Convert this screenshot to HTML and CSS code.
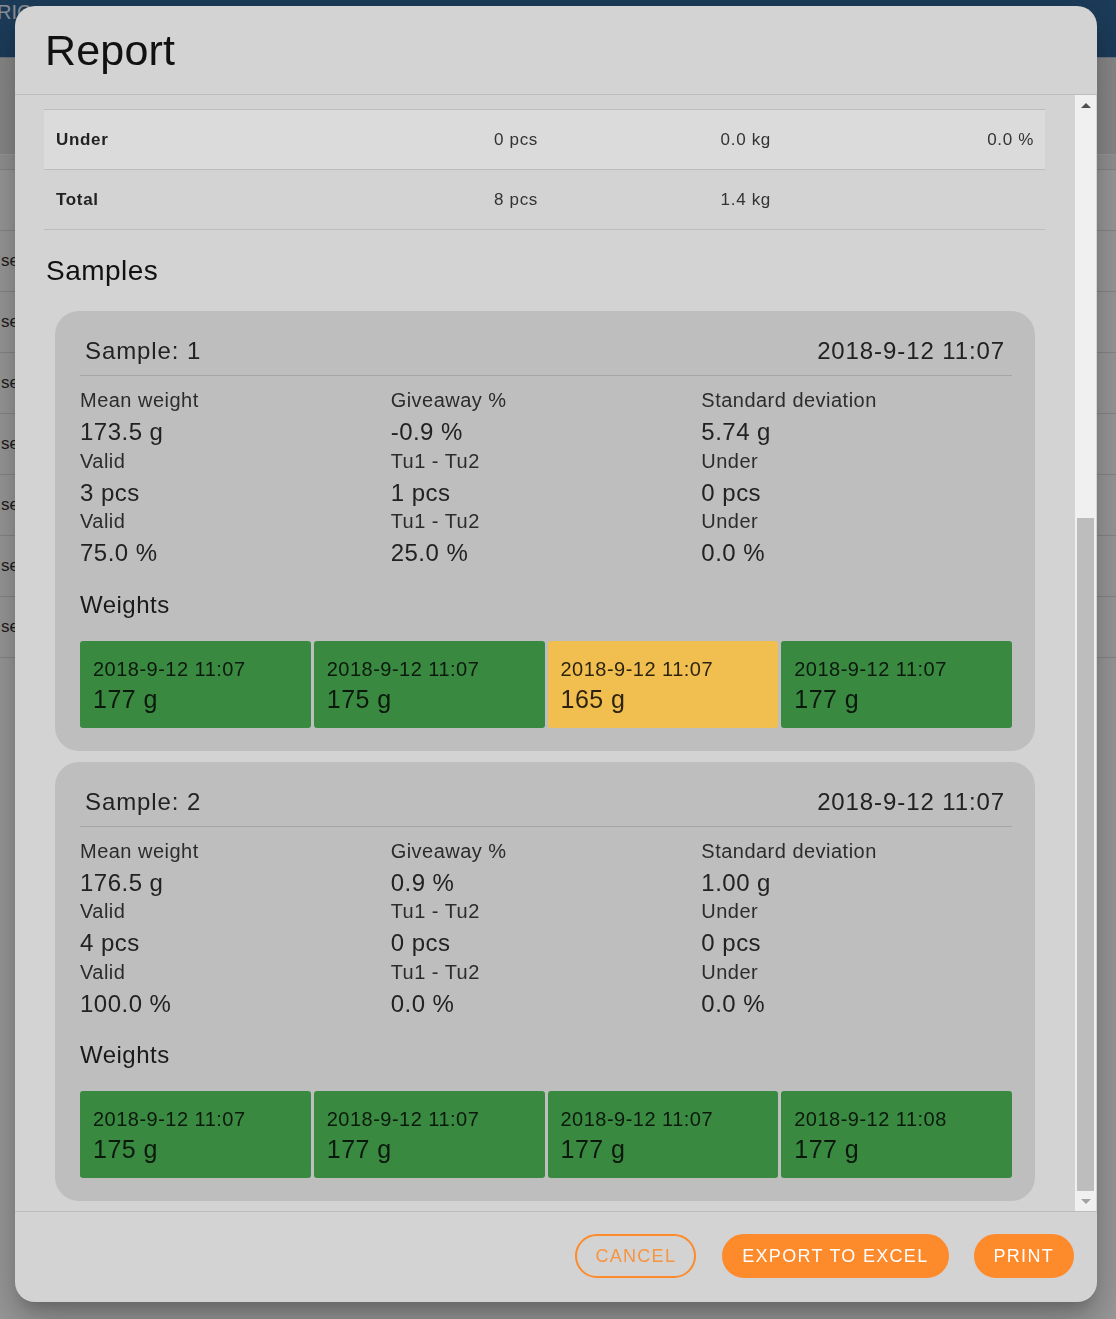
FILE: index.html
```html
<!DOCTYPE html>
<html lang="en">

<head>
    <meta charset="UTF-8">
    <meta name="viewport" content="width=device-width, initial-scale=1.0">
    <title>Report</title>
    <link rel="stylesheet" href="styles.css">
</head>

<body>
    <!-- page behind the modal -->
    <div class="page">
        <div class="topbar"><span class="brand">RIC</span></div>
        <div class="toolbar"></div>
        <div class="list">
            <div class="list-row head"></div>
            <div class="list-row"></div>
            <div class="list-row">se</div>
            <div class="list-row">se</div>
            <div class="list-row">se</div>
            <div class="list-row">se</div>
            <div class="list-row">se</div>
            <div class="list-row">se</div>
            <div class="list-row">se</div>
        </div>
    </div>
    <div class="backdrop"></div>

    <div class="dialog">
        <div class="dialog-title">
            <h2>Report</h2>
        </div>

        <div class="dialog-body">
            <div class="content">
                <div class="content-inner">
                    <div class="summary">
                        <div class="summary-row header">
                            <span class="cell label"></span>
                            <span class="cell num">Count</span>
                            <span class="cell num">Weight</span>
                            <span class="cell num">Percent</span>
                        </div>
                        <div class="summary-row alt">
                            <span class="cell label">Valid</span>
                            <span class="cell num">7 pcs</span>
                            <span class="cell num">1.2 kg</span>
                            <span class="cell num">87.5 %</span>
                        </div>
                        <div class="summary-row">
                            <span class="cell label">Tu1 - Tu2</span>
                            <span class="cell num">1 pcs</span>
                            <span class="cell num">0.2 kg</span>
                            <span class="cell num">12.5 %</span>
                        </div>
                        <div class="summary-row alt">
                            <span class="cell label">Under</span>
                            <span class="cell num">0 pcs</span>
                            <span class="cell num">0.0 kg</span>
                            <span class="cell num">0.0 %</span>
                        </div>
                        <div class="summary-row">
                            <span class="cell label">Total</span>
                            <span class="cell num">8 pcs</span>
                            <span class="cell num">1.4 kg</span>
                            <span class="cell num"></span>
                        </div>
                    </div>

                    <h3 class="section-title">Samples</h3>

                    <div class="sample">
                        <div class="sample-head">
                            <span>Sample: 1</span>
                            <span>2018-9-12 11:07</span>
                        </div>
                        <div class="stats">
                            <div class="stat">
                                <div class="stat-label">Mean weight</div>
                                <div class="stat-value">173.5 g</div>
                                <div class="stat-label">Valid</div>
                                <div class="stat-value">3 pcs</div>
                                <div class="stat-label">Valid</div>
                                <div class="stat-value">75.0 %</div>
                            </div>
                            <div class="stat">
                                <div class="stat-label">Giveaway %</div>
                                <div class="stat-value">-0.9 %</div>
                                <div class="stat-label">Tu1 - Tu2</div>
                                <div class="stat-value">1 pcs</div>
                                <div class="stat-label">Tu1 - Tu2</div>
                                <div class="stat-value">25.0 %</div>
                            </div>
                            <div class="stat">
                                <div class="stat-label">Standard deviation</div>
                                <div class="stat-value">5.74 g</div>
                                <div class="stat-label">Under</div>
                                <div class="stat-value">0 pcs</div>
                                <div class="stat-label">Under</div>
                                <div class="stat-value">0.0 %</div>
                            </div>
                        </div>
                        <h4 class="weights-title">Weights</h4>
                        <div class="weights">
                            <div class="weight ok">
                                <div class="weight-date">2018-9-12 11:07</div>
                                <div class="weight-value">177 g</div>
                            </div>
                            <div class="weight ok">
                                <div class="weight-date">2018-9-12 11:07</div>
                                <div class="weight-value">175 g</div>
                            </div>
                            <div class="weight warn">
                                <div class="weight-date">2018-9-12 11:07</div>
                                <div class="weight-value">165 g</div>
                            </div>
                            <div class="weight ok">
                                <div class="weight-date">2018-9-12 11:07</div>
                                <div class="weight-value">177 g</div>
                            </div>
                        </div>
                    </div>

                    <div class="sample">
                        <div class="sample-head">
                            <span>Sample: 2</span>
                            <span>2018-9-12 11:07</span>
                        </div>
                        <div class="stats">
                            <div class="stat">
                                <div class="stat-label">Mean weight</div>
                                <div class="stat-value">176.5 g</div>
                                <div class="stat-label">Valid</div>
                                <div class="stat-value">4 pcs</div>
                                <div class="stat-label">Valid</div>
                                <div class="stat-value">100.0 %</div>
                            </div>
                            <div class="stat">
                                <div class="stat-label">Giveaway %</div>
                                <div class="stat-value">0.9 %</div>
                                <div class="stat-label">Tu1 - Tu2</div>
                                <div class="stat-value">0 pcs</div>
                                <div class="stat-label">Tu1 - Tu2</div>
                                <div class="stat-value">0.0 %</div>
                            </div>
                            <div class="stat">
                                <div class="stat-label">Standard deviation</div>
                                <div class="stat-value">1.00 g</div>
                                <div class="stat-label">Under</div>
                                <div class="stat-value">0 pcs</div>
                                <div class="stat-label">Under</div>
                                <div class="stat-value">0.0 %</div>
                            </div>
                        </div>
                        <h4 class="weights-title">Weights</h4>
                        <div class="weights">
                            <div class="weight ok">
                                <div class="weight-date">2018-9-12 11:07</div>
                                <div class="weight-value">175 g</div>
                            </div>
                            <div class="weight ok">
                                <div class="weight-date">2018-9-12 11:07</div>
                                <div class="weight-value">177 g</div>
                            </div>
                            <div class="weight ok">
                                <div class="weight-date">2018-9-12 11:07</div>
                                <div class="weight-value">177 g</div>
                            </div>
                            <div class="weight ok">
                                <div class="weight-date">2018-9-12 11:08</div>
                                <div class="weight-value">177 g</div>
                            </div>
                        </div>
                    </div>
                </div>
            </div>

            <!-- scrolled to the bottom -->
            <div class="scrollbar">
                <div class="sb-arrow"><span class="tri up"></span></div>
                <div class="sb-track"><div class="sb-thumb"></div></div>
                <div class="sb-arrow"><span class="tri down"></span></div>
            </div>
        </div>

        <div class="dialog-actions">
            <button class="btn outlined">Cancel</button>
            <button class="btn filled">Export to Excel</button>
            <button class="btn filled">Print</button>
        </div>
    </div>
</body>

</html>
```

FILE: styles.css
```css
html,
body {
    margin: 0;
    height: 100%;
}

body {
    font-family: "Liberation Sans", Arial, sans-serif;
    background-color: #fff;
    overflow: hidden;
}

/* page behind the dialog */
.topbar {
    height: 43px;
    background-color: #2f6496;
    border-bottom: 1px solid #b5c6d8;
    padding-bottom: 14px;
    background-clip: padding-box;
    box-shadow: inset 0 -14px 0 #2f6496;
}

.brand {
    display: block;
    margin-left: -3px;
    padding-top: 1px;
    color: #e6eef6;
    font-size: 20px;
}

.toolbar {
    height: 96px;
    background-color: #e4e4e4;
    border-bottom: 1px solid #fff;
}

.list-row {
    height: 60px;
    line-height: 60px;
    border-bottom: 1px solid #e0e0e0;
    font-size: 17px;
    color: #333;
    padding-left: 1px;
}

.list-row.head {
    height: 14px;
    background-color: #f4f4f4;
}

.backdrop {
    position: fixed;
    inset: 0;
    background-color: rgba(0, 0, 0, 0.4);
}

/* dialog */
.dialog {
    position: fixed;
    left: 15px;
    top: 6px;
    width: 1082px;
    height: 1296px;
    display: flex;
    flex-direction: column;
    background-color: #d3d3d3;
    border-radius: 20px;
    overflow: hidden;
    box-shadow: 0 11px 15px -7px rgba(0, 0, 0, 0.2),
        0 24px 38px 3px rgba(0, 0, 0, 0.14),
        0 9px 46px 8px rgba(0, 0, 0, 0.12);
}

.dialog-title {
    height: 88px;
    display: flex;
    align-items: center;
    padding: 0 30px;
    border-bottom: 1px solid #bcbcbc;
    flex-shrink: 0;
}

.dialog-title h2 {
    margin: 0;
    font-size: 43px;
    font-weight: 400;
    color: #111;
    letter-spacing: 0.2px;
}

.dialog-body {
    height: 1116px;
    display: flex;
    flex-shrink: 0;
}

.content {
    flex: 1;
    display: flex;
    flex-direction: column;
    justify-content: flex-end;
    overflow: hidden;
}

.content-inner {
    padding: 15px 30px 0 29px;
    letter-spacing: 0.03em;
}

/* summary table */
.summary-row {
    display: grid;
    grid-template-columns: 272px 233px 233px 263px;
    height: 59px;
    align-items: center;
    border-bottom: 1px solid #bdbdbd;
    font-size: 17px;
    color: #333;
    letter-spacing: 0.04em;
}

.summary-row.alt {
    background-color: #dbdbdb;
}

.cell {
    padding: 0 11px 0 12px;
}

.cell.label {
    font-weight: bold;
    color: #222;
}

.cell.num {
    text-align: right;
}

.section-title {
    margin: 23px 0 22px 2px;
    font-size: 28px;
    line-height: 36px;
    font-weight: 400;
    color: #111;
}

/* sample cards */
.sample {
    margin: 0 10px 11px 11px;
    padding: 20px 23px 23px 25px;
    background-color: #bebebe;
    border-radius: 24px;
    color: #222;
}

.sample:last-child {
    margin-bottom: 10px;
}

.sample-head {
    height: 40px;
    display: flex;
    align-items: center;
    justify-content: space-between;
    padding: 0 7px 4px 5px;
    border-bottom: 1px solid #a6a6a6;
    font-size: 24px;
    letter-spacing: 0.9px;
}

.stats {
    display: grid;
    grid-template-columns: repeat(3, 1fr);
    margin-top: 10px;
}

.stat-label {
    font-size: 20px;
    line-height: 28px;
    color: #2c2c2c;
}

.stat-value {
    font-size: 24px;
    line-height: 32.5px;
    color: #222;
    padding-top: 2px;
    margin-bottom: -2px;
}

.weights-title {
    margin: 21px 0 20px;
    font-size: 24px;
    line-height: 32px;
    font-weight: 400;
    color: #1a1a1a;
}

.weights {
    display: grid;
    grid-template-columns: repeat(4, 1fr);
    gap: 3px;
}

.weight {
    padding: 14px 14px 13px 13px;
    border-radius: 3px;
    color: rgba(0, 0, 0, 0.82);
}

.weight.ok {
    background-color: #3a8941;
}

.weight.warn {
    background-color: #f1be50;
}

.weight-date {
    font-size: 20px;
    line-height: 28px;
}

.weight-value {
    font-size: 25px;
    line-height: 32px;
}

/* fake scrollbar */
.scrollbar {
    width: 21px;
    margin-right: 1px;
    display: flex;
    flex-direction: column;
    background-color: #f0f0f0;
}

.sb-arrow {
    height: 20px;
    display: flex;
    align-items: center;
    justify-content: center;
}

.tri {
    width: 0;
    height: 0;
    border-left: 5px solid transparent;
    border-right: 5px solid transparent;
}

.tri.up {
    border-bottom: 5px solid #505050;
}

.tri.down {
    border-top: 5px solid #a3a3a3;
}

.sb-track {
    flex: 1;
    display: flex;
    flex-direction: column;
    justify-content: flex-end;
}

.sb-thumb {
    height: 673px;
    margin: 0 2px;
    background-color: #bdbdbd;
}

/* actions */
.dialog-actions {
    flex: 1;
    display: flex;
    justify-content: flex-end;
    align-items: flex-start;
    gap: 25px;
    padding: 22px 23px 0 0;
    border-top: 1px solid #bcbcbc;
}

.btn {
    height: 44px;
    padding: 0 18px;
    border-radius: 22px;
    border: 2px solid #fd8a2b;
    font-family: "Liberation Sans", Arial, sans-serif;
    font-size: 18px;
    letter-spacing: 1.3px;
    text-transform: uppercase;
    cursor: pointer;
}

.btn.outlined {
    background-color: transparent;
    color: #f79440;
    padding: 0 18px;
    margin-right: 1px;
}

.btn.filled {
    background-color: #fd8a2b;
    color: #fff;
}
```
